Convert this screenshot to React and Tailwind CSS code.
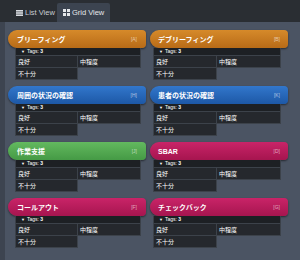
import React from "react";

const cards = [
  { title: "ブリーフィング", key: "A", color: "from-[#d68a2a] to-[#b86b17]" },
  { title: "デブリーフィング", key: "B", color: "from-[#d68a2a] to-[#b86b17]" },
  { title: "周囲の状況の確認", key: "H", color: "from-[#3277cc] to-[#1d58a6]" },
  { title: "患者の状況の確認", key: "K", color: "from-[#3277cc] to-[#1d58a6]" },
  { title: "作業支援", key: "J", color: "from-[#63b95f] to-[#459a45]" },
  { title: "SBAR", key: "D", color: "from-[#c92468] to-[#a6154f]" },
  { title: "コールアウト", key: "F", color: "from-[#c92468] to-[#a6154f]" },
  { title: "チェックバック", key: "G", color: "from-[#c92468] to-[#a6154f]" },
];

const font = { fontFamily: '"Liberation Sans", "Noto Sans CJK JP", sans-serif' };

const Card = ({ card, right }) => (
  <div className="flex flex-col h-[50px]">
    <div
      className={`h-[18px] flex items-center justify-between bg-gradient-to-b ${card.color} rounded-l-[9px] rounded-r-[4px] shadow-[0_1px_2px_rgba(0,0,0,0.5)] ${
        right ? "pl-[8px] pr-[8px]" : "pl-[9px] pr-[9px]"
      }`}
    >
      <span className="text-[7px] text-white font-bold leading-none">{card.title}</span>
      <span className="text-[5px] text-white/60 leading-none">[{card.key}]</span>
    </div>
    <div className={right ? "ml-[3px] mr-[7px]" : "ml-[7px] mr-[5px]"}>
      <div className="h-[7px] bg-[#1d2024] border-x border-[#3a4048] flex items-center pl-[5px] gap-[2px] text-[5px] leading-none text-white">
        <span className="text-[4px]">▼</span>
        <span>Tags: <b>3</b></span>
      </div>
      <div className="grid grid-cols-2 text-[6px] leading-none text-white">
        <div className="h-[13px] bg-[#25282d] border border-[#3c424a] flex items-center pl-[2px]">良好</div>
        <div className="h-[13px] bg-[#25282d] border border-l-0 border-[#3c424a] flex items-center pl-[2px]">中程度</div>
        <div className="h-[12px] bg-[#25282d] border border-t-0 border-[#3c424a] flex items-center pl-[2px]">不十分</div>
      </div>
    </div>
  </div>
);

export default function App() {
  return (
    <div className="w-[300px] h-[260px] bg-[#3d4450] overflow-hidden flex flex-col" style={font}>
      <div className="h-[22px] bg-[#2a2e33] flex items-end pl-[14px]">
        <div className="h-[19px] flex items-center gap-[2px] px-[2px] text-[7.5px] text-[#c9cdd2]">
          <svg width="7" height="6" viewBox="0 0 7 6">
            <rect x="0" y="0" width="7" height="1.6" fill="#d8dbe0" />
            <rect x="0" y="2.2" width="7" height="1.6" fill="#d8dbe0" />
            <rect x="0" y="4.4" width="7" height="1.6" fill="#d8dbe0" />
          </svg>
          <span>List View</span>
        </div>
        <div className="h-[19px] bg-[#3c4450] rounded-t-[2px] flex items-center gap-[2px] px-[6px] text-[7.5px] text-[#e4e7ea]">
          <svg width="7" height="7" viewBox="0 0 7 7">
            <rect x="0" y="0" width="3" height="3" fill="#e4e7ea" />
            <rect x="4" y="0" width="3" height="3" fill="#e4e7ea" />
            <rect x="0" y="4" width="3" height="3" fill="#e4e7ea" />
            <rect x="4" y="4" width="3" height="3" fill="#e4e7ea" />
          </svg>
          <span>Grid View</span>
        </div>
      </div>
      <div className="flex-1 ml-[5px] bg-[#4b5463] pt-[8px] pl-[3px] pr-[12px]">
        <div className="grid grid-cols-[138px_138px] gap-x-[4px] gap-y-[6px]">
          {cards.map((card, i) => (
            <Card key={card.key} card={card} right={i % 2 === 1} />
          ))}
        </div>
      </div>
    </div>
  );
}
